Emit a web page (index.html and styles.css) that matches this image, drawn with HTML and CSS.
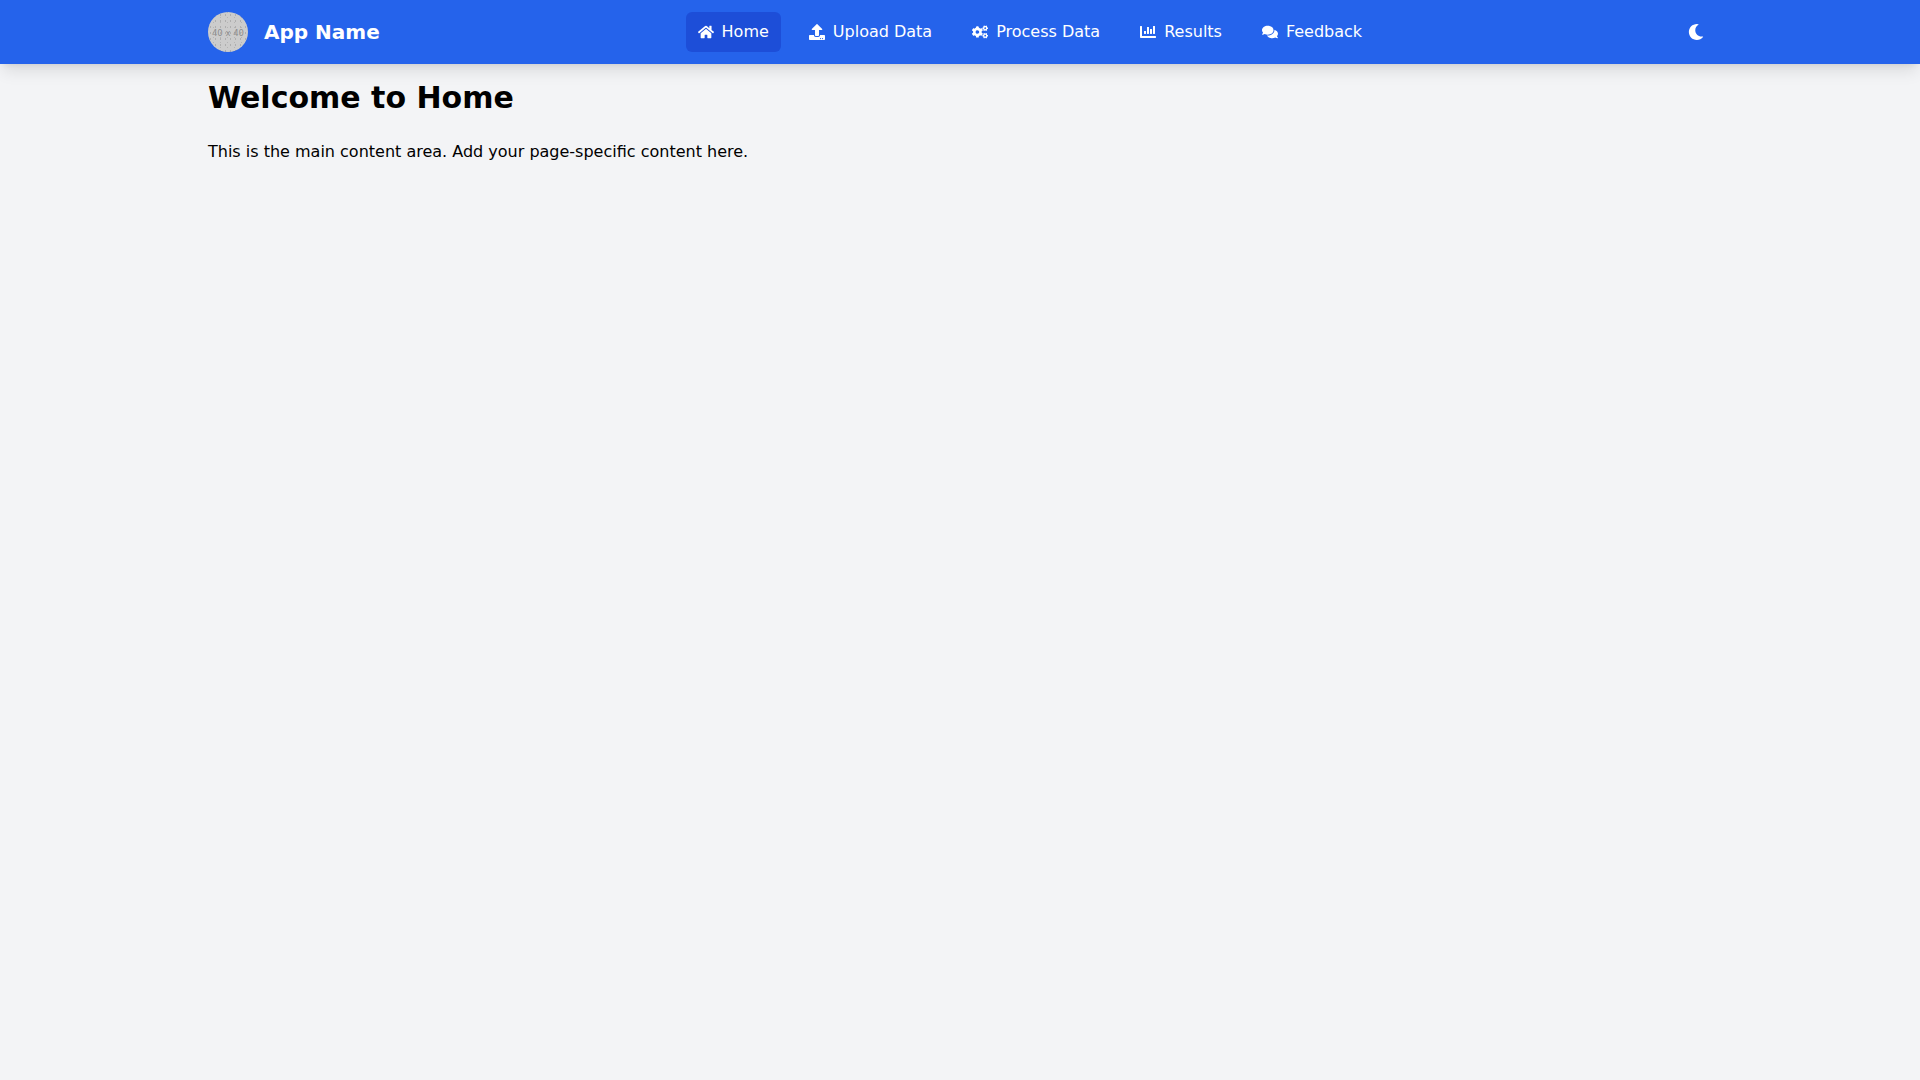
FILE: index.html
```html
<!DOCTYPE html>
<html lang="en">
<head>
  <meta charset="UTF-8">
  <meta name="viewport" content="width=device-width, initial-scale=1.0">
  <title>App Name</title>
  <link rel="stylesheet" href="styles.css">
</head>
<body>
  <header class="navbar">
    <div class="container navbar-inner">
      <a class="brand" href="#">
        <span class="logo">40 x 40</span>
        <span class="brand-name">App Name</span>
      </a>

      <nav class="nav-links">
        <a class="nav-link active" href="#">
          <svg class="icon" viewBox="0 0 576 512"><path d="M280.37 148.26L96 300.11V464a16 16 0 0 0 16 16l112.06-.29a16 16 0 0 0 15.92-16V368a16 16 0 0 1 16-16h64a16 16 0 0 1 16 16v95.64a16 16 0 0 0 16 16.05L464 480a16 16 0 0 0 16-16V300L295.67 148.26a12.19 12.19 0 0 0-15.3 0zM571.6 251.47L488 182.56V44.05a12 12 0 0 0-12-12h-56a12 12 0 0 0-12 12v72.61L318.47 43a48 48 0 0 0-61 0L4.34 251.47a12 12 0 0 0-1.6 16.9l25.5 31A12 12 0 0 0 45.15 301l235.22-193.74a12.19 12.19 0 0 1 15.3 0L530.9 301a12 12 0 0 0 16.9-1.6l25.5-31a12 12 0 0 0-1.7-16.93z"/></svg>
          Home
        </a>
        <a class="nav-link" href="#">
          <svg class="icon" viewBox="0 0 512 512"><path d="M296 384h-80c-13.3 0-24-10.7-24-24V192h-87.7c-17.8 0-26.7-21.5-14.1-34.1L242.3 5.7c7.5-7.5 19.8-7.5 27.3 0l152.2 152.2c12.6 12.6 3.7 34.1-14.1 34.1H320v168c0 13.3-10.7 24-24 24zm216-8v112c0 13.3-10.7 24-24 24H24c-13.3 0-24-10.7-24-24V376c0-13.3 10.7-24 24-24h136v8c0 30.9 25.1 56 56 56h80c30.9 0 56-25.1 56-56v-8h136c13.3 0 24 10.7 24 24zm-124 88c0-11-9-20-20-20s-20 9-20 20 9 20 20 20 20-9 20-20zm64 0c0-11-9-20-20-20s-20 9-20 20 9 20 20 20 20-9 20-20z"/></svg>
          Upload Data
        </a>
        <a class="nav-link" href="#">
          <svg class="icon" viewBox="0 0 640 512"><path d="M512.1 191l-8.2 14.3c-3 5.3-9.4 7.5-15.1 5.4-11.8-4.4-22.6-10.7-32.1-18.6-4.6-3.8-5.8-10.5-2.8-15.7l8.2-14.3c-6.9-8-12.3-17.3-15.9-27.4h-16.5c-6 0-11.2-4.3-12.2-10.3-2-12-2.1-24.6 0-37.1 1-6 6.2-10.4 12.2-10.4h16.5c3.6-10.1 9-19.4 15.9-27.4l-8.2-14.3c-3-5.2-1.9-11.9 2.8-15.7 9.5-7.9 20.4-14.2 32.1-18.6 5.7-2.1 12.1.1 15.1 5.4l8.2 14.3c10.5-1.9 21.2-1.9 31.7 0L552 6.3c3-5.3 9.4-7.5 15.1-5.4 11.8 4.4 22.6 10.7 32.1 18.6 4.6 3.8 5.8 10.5 2.8 15.7l-8.2 14.3c6.9 8 12.3 17.3 15.9 27.4h16.5c6 0 11.2 4.3 12.2 10.3 2 12 2.1 24.6 0 37.1-1 6-6.2 10.4-12.2 10.4h-16.5c-3.6 10.1-9 19.4-15.9 27.4l8.2 14.3c3 5.2 1.9 11.9-2.8 15.7-9.5 7.9-20.4 14.2-32.1 18.6-5.7 2.1-12.1-.1-15.1-5.4l-8.2-14.3c-10.4 1.9-21.2 1.9-31.7 0zm-10.5-58.8c38.5 29.6 82.4-14.3 52.8-52.8-38.5-29.7-82.4 14.3-52.8 52.8zM386.3 286.1l33.7 16.8c10.1 5.8 14.5 18.1 10.5 29.1-8.9 24.2-26.4 46.4-42.6 65.8-7.4 8.9-20.2 11.1-30.3 5.3l-29.1-16.8c-16 13.7-34.6 24.6-54.9 31.7v33.6c0 11.6-8.3 21.6-19.7 23.6-24.6 4.2-50.4 4.4-75.9 0-11.5-2-20-11.9-20-23.6V418c-20.3-7.2-38.9-18-54.9-31.7L74 403c-10 5.8-22.9 3.6-30.3-5.3-16.2-19.4-33.3-41.6-42.2-65.7-4-10.9.4-23.2 10.5-29.1l33.3-16.8c-3.9-20.9-3.9-42.4 0-63.4L12 205.8c-10.1-5.8-14.6-18.1-10.5-29 8.9-24.2 26-46.4 42.2-65.8 7.4-8.9 20.2-11.1 30.3-5.3l29.1 16.8c16-13.7 34.6-24.6 54.9-31.7V57.1c0-11.5 8.2-21.5 19.6-23.5 24.6-4.2 50.5-4.4 76-.1 11.5 2 20 11.9 20 23.6v33.6c20.3 7.2 38.9 18 54.9 31.7l29.1-16.8c10-5.8 22.9-3.6 30.3 5.3 16.2 19.4 33.2 41.6 42.1 65.8 4 10.9.1 23.2-10 29.1l-33.7 16.8c3.9 21 3.9 42.5 0 63.5zm-117.6 21.1c59.2-77-28.7-164.9-105.7-105.7-59.2 77 28.7 164.9 105.7 105.7zm243.4 182.7l-8.2 14.3c-3 5.3-9.4 7.5-15.1 5.4-11.8-4.4-22.6-10.7-32.1-18.6-4.6-3.8-5.8-10.5-2.8-15.7l8.2-14.3c-6.9-8-12.3-17.3-15.9-27.4h-16.5c-6 0-11.2-4.3-12.2-10.3-2-12-2.1-24.6 0-37.1 1-6 6.2-10.4 12.2-10.4h16.5c3.6-10.1 9-19.4 15.9-27.4l-8.2-14.3c-3-5.2-1.9-11.9 2.8-15.7 9.5-7.9 20.4-14.2 32.1-18.6 5.7-2.1 12.1.1 15.1 5.4l8.2 14.3c10.5-1.9 21.2-1.9 31.7 0l8.2-14.3c3-5.3 9.4-7.5 15.1-5.4 11.8 4.4 22.6 10.7 32.1 18.6 4.6 3.8 5.8 10.5 2.8 15.7l-8.2 14.3c6.9 8 12.3 17.3 15.9 27.4h16.5c6 0 11.2 4.3 12.2 10.3 2 12 2.1 24.6 0 37.1-1 6-6.2 10.4-12.2 10.4h-16.5c-3.6 10.1-9 19.4-15.9 27.4l8.2 14.3c3 5.2 1.9 11.9-2.8 15.7-9.5 7.9-20.4 14.2-32.1 18.6-5.7 2.1-12.1-.1-15.1-5.4l-8.2-14.3c-10.4 1.9-21.2 1.9-31.7 0zM501.6 431c38.5 29.6 82.4-14.3 52.8-52.8-38.5-29.6-82.4 14.3-52.8 52.8z"/></svg>
          Process Data
        </a>
        <a class="nav-link" href="#">
          <svg class="icon" viewBox="0 0 512 512"><path d="M332.8 320h38.4c6.4 0 12.8-6.4 12.8-12.8V172.8c0-6.4-6.4-12.8-12.8-12.8h-38.4c-6.4 0-12.8 6.4-12.8 12.8v134.4c0 6.4 6.4 12.8 12.8 12.8zm96 0h38.4c6.4 0 12.8-6.4 12.8-12.8V76.8c0-6.4-6.4-12.8-12.8-12.8h-38.4c-6.4 0-12.8 6.4-12.8 12.8v230.4c0 6.4 6.4 12.8 12.8 12.8zm-288 0h38.4c6.4 0 12.8-6.4 12.8-12.8v-70.4c0-6.4-6.4-12.8-12.8-12.8h-38.4c-6.4 0-12.8 6.4-12.8 12.8v70.4c0 6.4 6.4 12.8 12.8 12.8zm96 0h38.4c6.4 0 12.8-6.4 12.8-12.8V108.8c0-6.4-6.4-12.8-12.8-12.8h-38.4c-6.4 0-12.8 6.4-12.8 12.8v198.4c0 6.4 6.4 12.8 12.8 12.8zM496 384H64V80c0-8.84-7.16-16-16-16H16C7.16 64 0 71.16 0 80v336c0 17.67 14.33 32 32 32h464c8.84 0 16-7.16 16-16v-32c0-8.84-7.16-16-16-16z"/></svg>
          Results
        </a>
        <a class="nav-link" href="#">
          <svg class="icon" viewBox="0 0 576 512"><path d="M416 192c0-88.4-93.1-160-208-160S0 103.6 0 192c0 34.3 14.1 65.9 38 92-13.4 30.2-35.5 54.2-35.8 54.5-2.2 2.3-2.8 5.7-1.5 8.7S4.8 352 8 352c36.6 0 66.9-12.3 88.7-25 32.2 15.7 70.3 25 111.3 25 114.9 0 208-71.6 208-160zm122 220c23.9-26 38-57.7 38-92 0-66.9-53.5-124.2-129.3-148.1.9 6.6 1.3 13.3 1.3 20.1 0 105.9-107.7 192-240 192-10.8 0-21.3-.8-31.7-1.9C207.8 439.6 281.8 480 368 480c41 0 79.1-9.2 111.3-25 21.8 12.7 52.1 25 88.7 25 3.2 0 6.1-1.9 7.3-4.8 1.3-2.9.7-6.3-1.5-8.7-.3-.3-22.4-24.2-35.8-54.5z"/></svg>
          Feedback
        </a>
      </nav>

      <button class="theme-toggle" type="button" aria-label="Toggle theme">
        <svg class="icon" viewBox="0 0 512 512"><path d="M283.211 512c78.962 0 151.079-35.925 198.857-94.792 7.068-8.708-.639-21.43-11.562-19.35-124.203 23.654-238.262-71.576-238.262-196.954 0-72.222 38.662-138.635 101.498-174.394 9.686-5.512 7.25-20.197-3.756-22.23A258.156 258.156 0 0 0 283.211 0c-141.309 0-256 114.511-256 256 0 141.309 114.511 256 256 256z"/></svg>
      </button>
    </div>
  </header>

  <main class="container content">
    <h1>Welcome to Home</h1>
    <p>This is the main content area. Add your page-specific content here.</p>
  </main>
</body>
</html>
```

FILE: styles.css
```css
* {
  margin: 0;
  padding: 0;
  box-sizing: border-box;
}

body {
  font-family: "DejaVu Sans", sans-serif;
  font-size: 16px;
  line-height: 24px;
  background: #f3f4f6;
  color: #000;
  min-height: 100vh;
}

a {
  color: inherit;
  text-decoration: none;
}

.container {
  width: 100%;
  max-width: 1536px;
  margin: 0 auto;
  padding: 0 16px;
}

.navbar {
  background: #2563eb;
  color: #fff;
  box-shadow: 0 10px 15px -3px rgba(0, 0, 0, 0.1), 0 4px 6px -4px rgba(0, 0, 0, 0.1);
}

.navbar-inner {
  display: flex;
  justify-content: space-between;
  align-items: center;
  height: 64px;
}

.brand {
  display: flex;
  align-items: center;
  gap: 16px;
}

.logo {
  display: flex;
  justify-content: center;
  align-items: center;
  width: 40px;
  height: 40px;
  padding-top: 2px;
  border-radius: 50%;
  background-color: #cccccc;
  background-image:
    radial-gradient(circle, #aeaeae 0.8px, transparent 1px),
    radial-gradient(circle, #b4b4b4 0.7px, transparent 1px);
  background-size: 5px 6px, 7px 5px;
  background-position: 0 0, 2px 3px;
  color: #8c8c8c;
  font-size: 8.5px;
  line-height: 1;
  white-space: nowrap;
}

.brand-name {
  font-size: 20px;
  line-height: 28px;
  font-weight: 700;
}

.nav-links {
  display: flex;
  gap: 16px;
}

.nav-link {
  display: flex;
  align-items: center;
  gap: 8px;
  padding: 8px 12px;
  border-radius: 6px;
  color: #fff;
}

.nav-link.active {
  background: #1d4ed8;
}

.icon {
  display: block;
  width: 16px;
  height: 16px;
  fill: currentColor;
}

.theme-toggle {
  display: flex;
  padding: 8px;
  border: none;
  border-radius: 6px;
  background: none;
  color: #fff;
  cursor: pointer;
}

.content {
  padding-top: 16px;
}

.content h1 {
  font-size: 30px;
  line-height: 36px;
  font-weight: 700;
  margin-bottom: 24px;
}
```
